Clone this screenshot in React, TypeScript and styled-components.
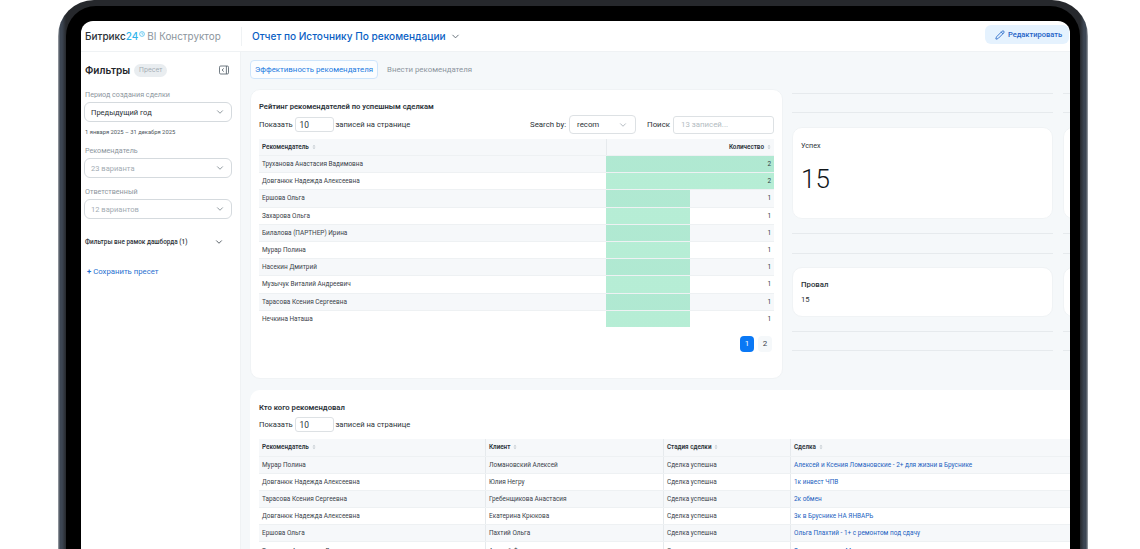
import React from 'react';
import styled, { createGlobalStyle } from 'styled-components';
import { ChevronDown, Pencil } from 'lucide-react';

const GlobalStyle = createGlobalStyle`
  html, body {
    margin: 0;
    height: 549px;
    overflow: hidden;
    background: #fff;
    font-family: Roboto, "Noto Sans", sans-serif;
    color: #2b3238;
  }
  * { box-sizing: border-box; }
`;

const ratingRows = [
  ['Труханова Анастасия Вадимовна', 2],
  ['Довганюк Надежда Алексеевна', 2],
  ['Ершова Ольга', 1],
  ['Захарова Ольга', 1],
  ['Билалова (ПАРТНЕР) Ирина', 1],
  ['Мурар Полина', 1],
  ['Насекин Дмитрий', 1],
  ['Музычук Виталий Андреевич', 1],
  ['Тарасова Ксения Сергеевна', 1],
  ['Нечкина Наташа', 1],
] as const;

const dealRows = [
  ['Мурар Полина', 'Ломановский Алексей', 'Алексей и Ксения Ломановские - 2+ для жизни в Бруснике'],
  ['Довганюк Надежда Алексеевна', 'Юлия Негру', '1к инвест ЧПВ'],
  ['Тарасова Ксения Сергеевна', 'Гребенщикова Анастасия', '2к обмен'],
  ['Довганюк Надежда Алексеевна', 'Екатерина Крюкова', '3к в Бруснике НА ЯНВАРЬ'],
  ['Ершова Ольга', 'Пахтий Ольга', 'Ольга Плахтий - 1+ с ремонтом под сдачу'],
  ['Тарасова Анастасия Вадимовна', 'Андрей Филиппов', 'Заречная ровно, Молодая семья'],
];

function SortMark() {
  return (
    <SortSvg viewBox="0 0 6 8" aria-hidden="true">
      <path d="M3 .5 5.2 3.4H.8zM3 7.5.8 4.6h4.4z" fill="#c3cad0" />
    </SortSvg>
  );
}

function ShowEntries() {
  return (
    <ShowGroup>
      Показать <CountInput>10</CountInput> записей на странице
    </ShowGroup>
  );
}

export default function App() {
  return (
    <>
      <GlobalStyle />
      <Bezel>
        <BlackFrame>
          <Screen>
            <Header>
              <Brand>
                Битрикс<BrandBlue>24</BrandBlue>
                <BrandMark viewBox="0 0 8 8" aria-hidden="true">
                  <circle cx="4" cy="4" r="3.2" fill="none" stroke="#2fb5ec" strokeWidth="0.9" />
                  <path d="M4 2v2.2h1.6" fill="none" stroke="#2fb5ec" strokeWidth="0.8" />
                </BrandMark>
                <BrandMuted>BI Конструктор</BrandMuted>
              </Brand>
              <ReportTitle>
                Отчет по Источнику По рекомендации
                <ChevronDown size={11} color="#5b6670" strokeWidth={2} />
              </ReportTitle>
              <EditButton>
                <Pencil size={10} strokeWidth={2} />
                Редактировать
              </EditButton>
            </Header>
            <Body>
              <Sidebar>
                <SidebarHead>
                  <SidebarTitle>Фильтры</SidebarTitle>
                  <PresetBadge>Пресет</PresetBadge>
                  <CollapseIcon viewBox="0 0 10 10" aria-hidden="true">
                    <rect x=".5" y="1" width="9" height="8" rx="1.2" fill="none" stroke="#4e5a64" strokeWidth=".8" />
                    <path d="M7.4 1v8" stroke="#4e5a64" strokeWidth=".8" />
                    <path d="M4.8 3.4 3 5l1.8 1.6" fill="none" stroke="#4e5a64" strokeWidth=".8" />
                  </CollapseIcon>
                </SidebarHead>
                <FieldLabel $top={13}>Период создания сделки</FieldLabel>
                <SelectBox>
                  Предыдущий год
                  <ChevronDown size={10} color="#7b858d" />
                </SelectBox>
                <DateHint>1 января 2025 – 31 декабря 2025</DateHint>
                <FieldLabel $top={7}>Рекомендатель</FieldLabel>
                <SelectBox $muted>
                  23 варианта
                  <ChevronDown size={10} color="#7b858d" />
                </SelectBox>
                <FieldLabel $top={8}>Ответственный</FieldLabel>
                <SelectBox $muted>
                  12 вариантов
                  <ChevronDown size={10} color="#7b858d" />
                </SelectBox>
                <ExtraFilters>
                  Фильтры вне рамок дашборда (1)
                  <ChevronDown size={10} color="#3c464e" strokeWidth={2} />
                </ExtraFilters>
                <SavePreset>
                  <PlusSign>+</PlusSign> Сохранить пресет
                </SavePreset>
              </Sidebar>
              <Main>
                <Tabs>
                  <Tab $active>Эффективность рекомендателя</Tab>
                  <Tab>Внести рекомендателя</Tab>
                </Tabs>
                <TopSection>
                  <RatingCard>
                    <CardTitle>Рейтинг рекомендателей по успешным сделкам</CardTitle>
                    <Controls>
                      <ShowEntries />
                      <SearchGroup>
                        Search by:
                        <SearchSelect>
                          recom
                          <ChevronDown size={10} color="#a6afb6" />
                        </SearchSelect>
                      </SearchGroup>
                      <SearchGroup>
                        Поиск
                        <SearchInput>13 записей...</SearchInput>
                      </SearchGroup>
                    </Controls>
                    <RatingHead>
                      <HeadCell>
                        Рекомендатель <SortMark />
                      </HeadCell>
                      <HeadCell $right $divider>
                        Количество <SortMark />
                      </HeadCell>
                    </RatingHead>
                    {ratingRows.map(([name, count]) => (
                      <RatingRow key={name}>
                        <Cell>{name}</Cell>
                        <BarCell $fill={count * 50}>{count}</BarCell>
                      </RatingRow>
                    ))}
                    <Pagination>
                      <PageButton $active>1</PageButton>
                      <PageButton>2</PageButton>
                    </Pagination>
                  </RatingCard>
                  <Metrics>
                    <MetricColumn>
                      <Rule $gap={18} />
                      <Rule $gap={14} />
                      <SuccessCard>
                        <SuccessTitle>Успех</SuccessTitle>
                        <BigValue>15</BigValue>
                      </SuccessCard>
                      <Rule $gap={19} $top={14} />
                      <Rule $gap={13} />
                      <FailCard>
                        <MetricTitle>Провал</MetricTitle>
                        <SmallValue>15</SmallValue>
                      </FailCard>
                      <Rule $gap={18} $top={14} />
                      <Rule />
                    </MetricColumn>
                    <MetricColumn>
                      <Rule $gap={18} />
                      <Rule $gap={14} />
                      <SuccessCard />
                      <Rule $gap={19} $top={14} />
                      <Rule $gap={13} />
                      <FailCard />
                      <Rule $gap={18} $top={14} />
                      <Rule />
                    </MetricColumn>
                  </Metrics>
                </TopSection>
                <DealsCard>
                  <DealsTitle>Кто кого рекомендовал</DealsTitle>
                  <DealsControls>
                    <ShowEntries />
                  </DealsControls>
                  <DealsHead>
                    <HeadCell>
                      Рекомендатель <SortMark />
                    </HeadCell>
                    <HeadCell $divider>
                      Клиент <SortMark />
                    </HeadCell>
                    <HeadCell $divider>
                      Стадия сделки <SortMark />
                    </HeadCell>
                    <HeadCell $divider>
                      Сделка <SortMark />
                    </HeadCell>
                  </DealsHead>
                  {dealRows.map(([who, client, deal]) => (
                    <DealsRow key={deal}>
                      <Cell>{who}</Cell>
                      <Cell $divider>{client}</Cell>
                      <Cell $divider>Сделка успешна</Cell>
                      <LinkCell $divider>{deal}</LinkCell>
                    </DealsRow>
                  ))}
                </DealsCard>
              </Main>
            </Body>
          </Screen>
        </BlackFrame>
      </Bezel>
    </>
  );
}

const Bezel = styled.div`
  width: 1030px;
  height: 549px;
  margin-left: 58px;
  padding: 6px 8px 0;
  border-radius: 36px 36px 0 0;
  background: linear-gradient(
    90deg,
    #a5a9ae 0,
    #3d4653 2px,
    #3d4653 4px,
    #26282c 8px,
    #26282c calc(100% - 8px),
    #3d4653 calc(100% - 4px),
    #3d4653 calc(100% - 2px),
    #a5a9ae 100%
  );
  overflow: hidden;
`;

const BlackFrame = styled.div`
  height: 543px;
  padding: 15px 10px 0 15px;
  border-radius: 30px 30px 0 0;
  background: #000;
`;

const Screen = styled.div`
  width: 989px;
  height: 528px;
  border-radius: 12px 12px 0 0;
  background: #fff;
  overflow: hidden;
`;

const Header = styled.header`
  height: 31px;
  display: flex;
  align-items: center;
  border-bottom: 1px solid #eff2f4;
`;

const Brand = styled.div`
  width: 160px;
  height: 100%;
  padding-left: 4px;
  display: flex;
  align-items: center;
  flex: none;
  font: 500 10px Inter, sans-serif;
  color: #2b3238;
  white-space: nowrap;
`;

const BrandBlue = styled.span`
  color: #2fb5ec;
`;

const BrandMark = styled.svg`
  width: 6px;
  height: 6px;
  margin: -5px 2px 0 1px;
`;

const BrandMuted = styled.span`
  color: #8b959d;
  font-weight: 400;
  font-size: 9.9px;
`;

const ReportTitle = styled.div`
  flex: 1;
  height: 19px;
  padding-left: 10px;
  display: flex;
  align-items: center;
  gap: 4px;
  border-left: 1px solid #eff2f4;
  font: 500 10.1px Inter, sans-serif;
  color: #0b5fc4;
`;

const EditButton = styled.div`
  width: 84px;
  height: 19px;
  margin: -3px 1px 0 0;
  padding-left: 3px;
  display: flex;
  align-items: center;
  justify-content: center;
  gap: 3px;
  border-radius: 6px;
  background: #e5f2fe;
  font: 500 7.5px Roboto, sans-serif;
  color: #1f63c7;
`;

const Body = styled.div`
  display: flex;
  height: 497px;
`;

const Sidebar = styled.aside`
  width: 160px;
  flex: none;
  padding: 12px 8px 0 3px;
  display: flex;
  flex-direction: column;
  align-items: stretch;
  border-right: 1px solid #eff2f4;
`;

const SidebarHead = styled.div`
  height: 12px;
  padding-left: 1px;
  display: flex;
  align-items: center;
  gap: 4px;
`;

const SidebarTitle = styled.div`
  font: 600 10px Inter, sans-serif;
  color: #1e252b;
`;

const PresetBadge = styled.div`
  height: 13px;
  padding: 0 5px;
  display: flex;
  align-items: center;
  border-radius: 7px;
  background: #e9edf0;
  font: 400 6.5px Inter, sans-serif;
  color: #a3acb3;
`;

const CollapseIcon = styled.svg`
  width: 10px;
  height: 10px;
  margin-left: auto;
  margin-right: 3px;
`;

const FieldLabel = styled.div<{ $top: number }>`
  margin-top: ${(p) => p.$top}px;
  margin-bottom: 2px;
  padding-left: 1px;
  font: 400 7.2px Roboto, sans-serif;
  line-height: 11px;
  color: #8d969e;
`;

const SelectBox = styled.div<{ $muted?: boolean }>`
  height: 20px;
  padding: 0 6px;
  display: flex;
  align-items: center;
  justify-content: space-between;
  border: 1px solid #d5dade;
  border-radius: 6px;
  background: #fff;
  font: 400 7.55px Roboto, sans-serif;
  color: ${(p) => (p.$muted ? '#a3acb3' : '#2b3238')};
`;

const DateHint = styled.div`
  margin-top: 5px;
  margin-bottom: 1px;
  padding-left: 1px;
  font: 400 5.8px Roboto, sans-serif;
  line-height: 10px;
  color: #4d5760;
`;

const ExtraFilters = styled.div`
  margin-top: 17px;
  padding: 0 8px 0 1px;
  display: flex;
  align-items: center;
  justify-content: space-between;
  font: 500 6.4px Roboto, sans-serif;
  line-height: 12px;
  color: #2b3238;
`;

const SavePreset = styled.div`
  margin-top: 18px;
  padding-left: 3px;
  font: 400 7.75px Roboto, sans-serif;
  line-height: 12px;
  color: #1f6fd0;
`;

const PlusSign = styled.span`
  font-weight: 700;
`;

const Main = styled.main`
  flex: 1;
  min-width: 0;
  padding-top: 8px;
  display: flex;
  flex-direction: column;
  overflow: hidden;
  background: #f5f8fa;
`;

const Tabs = styled.div`
  height: 19px;
  flex: none;
  margin-left: 9px;
  display: flex;
  gap: 4px;
`;

const Tab = styled.div<{ $active?: boolean }>`
  padding: 0 4px;
  display: flex;
  align-items: center;
  border: 1px solid ${(p) => (p.$active ? '#cfe5fb' : 'transparent')};
  border-radius: 4px;
  background: ${(p) => (p.$active ? '#fbfdff' : 'transparent')};
  font: 400 7.85px Roboto, sans-serif;
  color: ${(p) => (p.$active ? '#1b7be0' : '#8d969e')};
`;

const TopSection = styled.div`
  flex: none;
  margin-top: 10px;
  margin-left: 9px;
  display: flex;
  gap: 9px;
`;

const RatingCard = styled.section`
  width: 533px;
  height: 290px;
  flex: none;
  padding: 11px 8px 0;
  border: 1px solid #f0f3f5;
  border-radius: 10px;
  background: #fff;
`;

const CardTitle = styled.h2`
  margin: 0;
  font: 600 7.6px Roboto, sans-serif;
  line-height: 11px;
  color: #2b3238;
`;

const Controls = styled.div`
  margin-top: 3px;
  height: 19px;
  display: flex;
  align-items: center;
`;

const ShowGroup = styled.div`
  display: flex;
  align-items: center;
  font: 400 7.6px Roboto, sans-serif;
  color: #2b3238;
  white-space: pre;
`;

const CountInput = styled.div`
  width: 39px;
  height: 15px;
  padding-left: 4px;
  display: flex;
  align-items: center;
  border: 1px solid #dde1e4;
  border-radius: 3px;
  font-size: 8.4px;
`;

const SearchGroup = styled.div`
  display: flex;
  align-items: center;
  gap: 3px;
  font: 400 7.85px Roboto, sans-serif;
  color: #2b3238;
  &:nth-child(2) {
    margin-left: auto;
    margin-right: 11px;
  }
`;

const SearchSelect = styled.div`
  width: 67px;
  height: 19px;
  padding: 0 7px;
  display: flex;
  align-items: center;
  justify-content: space-between;
  border: 1px solid #dde1e4;
  border-radius: 4px;
`;

const SearchInput = styled.div`
  width: 101px;
  height: 18px;
  padding-left: 7px;
  display: flex;
  align-items: center;
  border: 1px solid #dde1e4;
  border-radius: 3px;
  color: #b3bbc1;
`;

const ratingColumns = '347px 168px';
const dealsColumns = '226px 178px 127px 300px';

const RatingHead = styled.div`
  margin-top: 5px;
  display: grid;
  grid-template-columns: ${ratingColumns};
  height: 16px;
  background: #f6f8fa;
`;

const DealsHead = styled.div`
  margin-top: 7px;
  display: grid;
  grid-template-columns: ${dealsColumns};
  height: 16.5px;
  background: #f6f8fa;
`;

const RatingRow = styled.div`
  display: grid;
  grid-template-columns: ${ratingColumns};
  height: 17.2px;
  border-top: 1px solid #eef1f3;
  &:nth-of-type(odd) {
    background: #f6f8fa;
  }
`;

const DealsRow = styled.div`
  display: grid;
  grid-template-columns: ${dealsColumns};
  height: 17.2px;
  border-top: 1px solid #eef1f3;
  &:nth-of-type(odd) {
    background: #f6f8fa;
  }
`;

const HeadCell = styled.div<{ $right?: boolean; $divider?: boolean }>`
  padding: 0 3px;
  display: flex;
  align-items: center;
  justify-content: ${(p) => (p.$right ? 'flex-end' : 'flex-start')};
  gap: 3px;
  border-left: ${(p) => (p.$divider ? '1px solid #e6eaed' : '0')};
  font: 600 6.3px Roboto, sans-serif;
  color: #2b3238;
  white-space: nowrap;
`;

const SortSvg = styled.svg`
  width: 4px;
  height: 6px;
  flex: none;
`;

const Cell = styled.div<{ $divider?: boolean }>`
  padding: 0 3px;
  display: flex;
  align-items: center;
  border-left: ${(p) => (p.$divider ? '1px solid #e6eaed' : '0')};
  font: 400 6.45px Roboto, sans-serif;
  color: #3a434a;
  white-space: nowrap;
`;

const LinkCell = styled(Cell)`
  color: #1c5fbf;
`;

const BarCell = styled.div<{ $fill: number }>`
  padding: 0 3px;
  display: flex;
  align-items: center;
  justify-content: flex-end;
  background: linear-gradient(
    90deg,
    rgba(46, 204, 135, 0.35) ${(p) => p.$fill}%,
    transparent ${(p) => p.$fill}%
  );
  font: 400 6.45px Roboto, sans-serif;
  color: #2f3b42;
`;

const Pagination = styled.div`
  margin-top: 9px;
  padding-right: 2px;
  display: flex;
  justify-content: flex-end;
  gap: 4px;
`;

const PageButton = styled.div<{ $active?: boolean }>`
  width: 14px;
  height: 16px;
  display: flex;
  align-items: center;
  justify-content: center;
  border-radius: 4px;
  background: ${(p) => (p.$active ? '#0a78f5' : '#f5f8fa')};
  font: 400 8px Roboto, sans-serif;
  color: ${(p) => (p.$active ? '#fff' : '#3a434a')};
`;

const Metrics = styled.div`
  display: flex;
  gap: 10px;
  flex: none;
`;

const MetricColumn = styled.div`
  width: 261px;
  flex: none;
  padding-top: 4px;
`;

const Rule = styled.div<{ $gap?: number; $top?: number }>`
  height: 1px;
  margin-top: ${(p) => p.$top ?? 0}px;
  margin-bottom: ${(p) => p.$gap ?? 0}px;
  background: #e6eaed;
`;

const SuccessCard = styled.div`
  height: 92px;
  padding: 12px 8px;
  border: 1px solid #f0f3f5;
  border-radius: 10px;
  background: #fff;
`;

const FailCard = styled(SuccessCard)`
  height: 50px;
  padding-top: 11px;
`;

const SuccessTitle = styled.div`
  font: 400 7.2px Roboto, sans-serif;
  line-height: 11px;
  color: #2b3238;
`;

const MetricTitle = styled.div`
  font: 500 7.8px Roboto, sans-serif;
  line-height: 11px;
  color: #2b3238;
`;

const BigValue = styled.div`
  margin-top: 11px;
  font: 300 26px Roboto, sans-serif;
  line-height: 34px;
  color: #11161a;
`;

const SmallValue = styled.div`
  margin-top: 4px;
  font: 400 7.6px Roboto, sans-serif;
  line-height: 11px;
  color: #2b3238;
`;

const DealsCard = styled.section`
  margin-top: 11px;
  margin-left: 9px;
  width: 860px;
  flex: 1;
  padding: 12px 9px 0;
  border-radius: 10px 0 0 0;
  background: #fff;
`;

const DealsTitle = styled.h2`
  margin: 0;
  font: 600 7.7px Roboto, sans-serif;
  line-height: 11px;
  color: #2b3238;
`;

const DealsControls = styled.div`
  margin-top: 4px;
  height: 15px;
  display: flex;
  align-items: center;
`;
